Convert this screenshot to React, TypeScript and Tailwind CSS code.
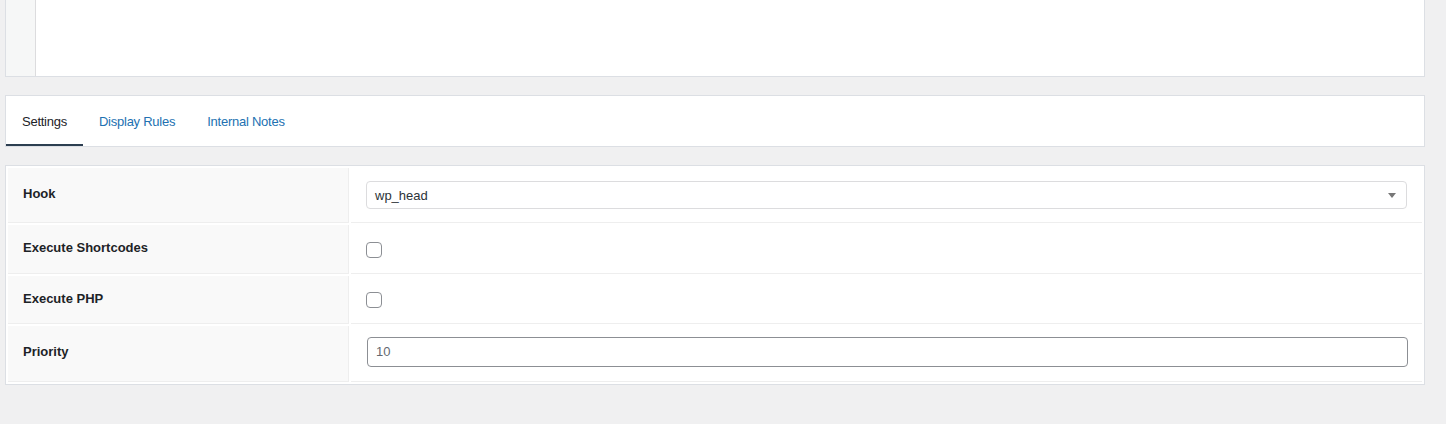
import { useState } from "react";

const TABS = ["Settings", "Display Rules", "Internal Notes"];

export default function App() {
  const [tab, setTab] = useState("Settings");
  const [shortcodes, setShortcodes] = useState(false);
  const [php, setPhp] = useState(false);

  return (
    <div
      className="min-h-[424px] bg-[#f0f0f1] px-[5px] text-[13px] text-[#1d2327] overflow-hidden"
      style={{ fontFamily: '"Liberation Sans", Arial, sans-serif' }}
    >
      <div className="w-[1420px]">
        {/* Code editor (cut off at top) */}
        <div className="flex h-[77px] border border-t-0 border-[#dcdfe4] bg-white">
          <div className="w-[30px] border-r border-[#dcdcde] bg-[#f6f7f7]" />
          <div className="flex-1" />
        </div>

        {/* Tabs */}
        <div className="mt-[18px] flex h-[52px] items-stretch border border-[#dcdfe4] bg-white">
          {TABS.map((t) => (
            <button
              key={t}
              onClick={() => setTab(t)}
              className={`px-4 pt-[3px] text-[13px] tracking-[-0.25px] border-b-2 ${
                tab === t
                  ? "border-[#2c3e50] text-[#1d2327]"
                  : "border-transparent text-[#2271b1]"
              }`}
            >
              {t}
            </button>
          ))}
        </div>

        {/* Settings table */}
        <div className="mt-[18px] border border-[#dcdfe4] bg-white">
          <table className="w-full border-separate border-spacing-[2px]">
            <tbody>
              <tr>
                <th className="w-[341px] h-[55px] border-r border-b border-[#eeeeee] bg-[#f9f9f9] pl-[15px] text-left align-middle font-bold">
                  <span className="relative -top-[1px]">Hook</span>
                </th>
                <td className="border-b border-[#eeeeee] px-[15px] align-middle">
                  <div className="relative flex h-[28px] items-center rounded-[4px] border border-[#dcdcde] bg-white pl-[8px] pt-[2px] text-[#2c3338]">
                    wp_head
                    <span className="absolute right-[10px] top-[11px] h-0 w-0 border-x-[4px] border-t-[5px] border-x-transparent border-t-[#777]" />
                  </div>
                </td>
              </tr>
              <tr>
                <th className="h-[49px] border-r border-b border-[#eeeeee] bg-[#f9f9f9] pl-[15px] text-left align-middle font-bold">
                  <span className="relative -top-[1px]">Execute Shortcodes</span>
                </th>
                <td className="border-b border-[#eeeeee] px-[15px] align-middle">
                  <button
                    onClick={() => setShortcodes(!shortcodes)}
                    className="mt-[1px] block h-[16px] w-[16px] rounded-[4px] border border-[#8c8f94] bg-white"
                  />
                </td>
              </tr>
              <tr>
                <th className="h-[48px] border-r border-b border-[#eeeeee] bg-[#f9f9f9] pl-[15px] text-left align-middle font-bold">
                  <span className="relative -top-[1px]">Execute PHP</span>
                </th>
                <td className="border-b border-[#eeeeee] px-[15px] align-middle">
                  <button
                    onClick={() => setPhp(!php)}
                    className="mt-[1px] block h-[16px] w-[16px] rounded-[4px] border border-[#8c8f94] bg-white"
                  />
                </td>
              </tr>
              <tr>
                <th className="h-[56px] border-r border-b border-[#eeeeee] bg-[#f9f9f9] pl-[15px] text-left align-middle font-bold">
                  <span className="relative -top-[2px]">Priority</span>
                </th>
                <td className="border-b border-[#eeeeee] pl-[16px] pr-[14px] align-middle">
                  <div className="relative -top-[2px] flex h-[30px] items-center rounded-[4px] border border-[#8c8f94] bg-white pl-[8px] text-[#646970]">
                    10
                  </div>
                </td>
              </tr>
            </tbody>
          </table>
        </div>
      </div>
    </div>
  );
}
